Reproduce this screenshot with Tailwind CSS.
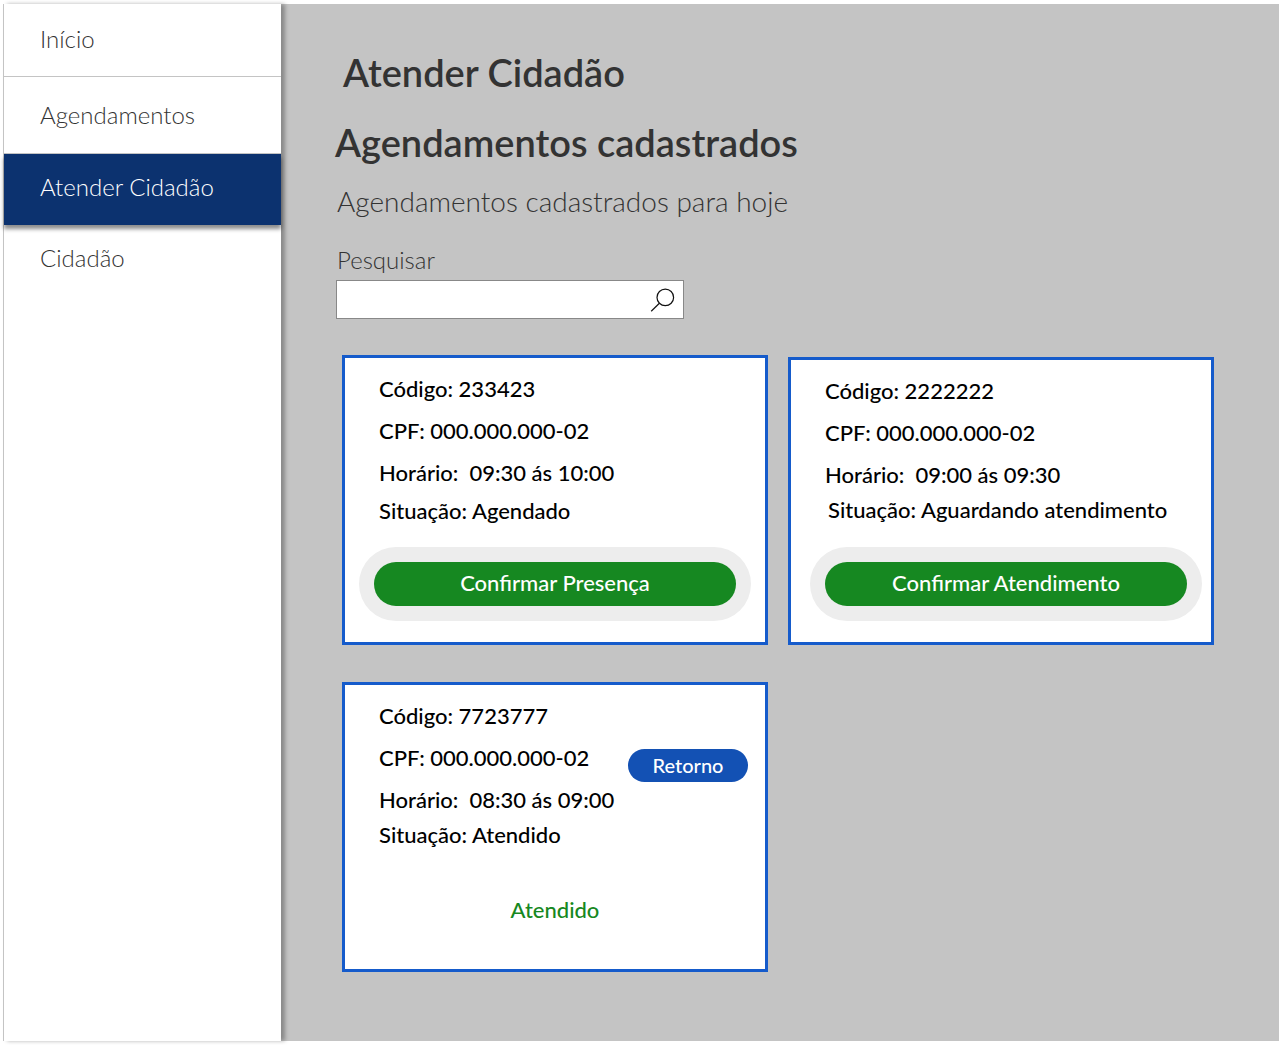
<!DOCTYPE html>
<html lang="pt-BR">
<head>
<meta charset="utf-8">
<meta name="viewport" content="width=device-width, initial-scale=1">
<title>Atender Cidadão</title>
<script src="https://cdn.jsdelivr.net/npm/@tailwindcss/browser@4"></script>
</head>
<body class="bg-white font-['Lato',sans-serif] text-black">
<div class="flex min-h-screen py-1 pl-[3px]">
  <nav class="relative z-10 w-[278px] shrink-0 border-l border-[#c4c4c4] bg-white text-2xl font-light text-[#333333] shadow-[4px_0_4px_rgba(0,0,0,0.3)]" aria-label="Menu principal">
    <a href="#" class="flex h-[73px] items-center border-b border-[#c4c4c4] pb-0.5 pl-9">Início</a>
    <a href="#" class="flex h-[77px] items-center border-b border-[#c4c4c4] pl-9">Agendamentos</a>
    <a href="#" aria-current="page" class="flex h-[71px] items-center bg-[#0c326f] pb-1.5 pl-9 text-white shadow-[0_4px_4px_rgba(0,0,0,0.45)]">Atender Cidadão</a>
    <a href="#" class="flex h-[71px] items-center pb-1.5 pl-9">Cidadão</a>
  </nav>

  <main class="min-w-0 flex-1 bg-[#c4c4c4] pt-[46px] pr-[65px] pb-16 pl-[54px]">
    <h1 class="pl-2 text-[38px] leading-11 font-semibold text-[#333333]">Atender Cidadão</h1>
    <h2 class="mt-[26px] text-[38px] leading-11 font-semibold text-[#333333]">Agendamentos cadastrados</h2>
    <p class="mt-[19px] pl-0.5 text-[28px] leading-9 font-light text-[#333333]">Agendamentos cadastrados para hoje</p>
    <form class="mt-[23px]">
      <label for="busca" class="block pb-0.5 pl-0.5 text-2xl leading-9 font-light text-[#333333]">Pesquisar</label>
      <div class="relative ml-px h-[39px] w-full max-w-[348px]">
        <input id="busca" type="search" class="h-full w-full border border-[#888888] bg-white pr-11 pl-3 text-xl outline-none">
        <button type="button" aria-label="Buscar" class="absolute top-2 right-2 size-[26px]">
          <svg viewBox="0 0 26 26" class="size-full" fill="none" stroke="#111111" stroke-width="1.2"><circle cx="15.3" cy="9.4" r="8.3"/><path d="M9.4 15.3 1.2 23.2"/></svg>
        </button>
      </div>
    </form>

    <section class="mt-9 ml-[7px] grid grid-cols-[repeat(2,minmax(0,426px))] items-end gap-x-5 gap-y-[37px] text-[22px] font-medium" aria-label="Agendamentos de hoje">
      <article class="border-3 border-[#155bcb] bg-white pt-[10px] pb-[21px]">
        <div class="pl-[34px]">
          <p class="leading-[42px]">Código: 233423</p>
          <p class="leading-[42px]">CPF: 000.000.000-02</p>
          <p class="leading-[42px]">Horário:&nbsp; 09:30 ás 10:00</p>
          <p class="leading-[34px]">Situação: Agendado</p>
        </div>
        <div class="mx-[14px] mt-[19px] rounded-full bg-[#ededed] p-[15px]">
          <button type="button" class="h-11 w-full rounded-full bg-[#168821] pb-1 text-white">Confirmar Presença</button>
        </div>
      </article>

      <article class="border-3 border-[#155bcb] bg-white pt-[10px] pb-[21px]">
        <div class="pl-[34px]">
          <p class="leading-[42px]">Código: 2222222</p>
          <p class="leading-[42px]">CPF: 000.000.000-02</p>
          <p class="leading-[42px]">Horário:&nbsp; 09:00 ás 09:30</p>
          <p class="pl-[3px] leading-7">Situação: Aguardando atendimento</p>
        </div>
        <div class="mt-[23px] mr-[9px] ml-[19px] rounded-full bg-[#ededed] p-[15px]">
          <button type="button" class="h-11 w-full rounded-full bg-[#168821] pb-1 text-white">Confirmar Atendimento</button>
        </div>
      </article>

      <article class="relative min-h-[290px] border-3 border-[#155bcb] bg-white pt-[10px] pb-[21px]">
        <div class="pl-[34px]">
          <p class="leading-[42px]">Código: 7723777</p>
          <p class="leading-[42px]">CPF: 000.000.000-02</p>
          <p class="leading-[42px]">Horário:&nbsp; 08:30 ás 09:00</p>
          <p class="leading-7">Situação: Atendido</p>
        </div>
        <p class="mt-6 text-center leading-[74px] text-[#168821]">Atendido</p>
        <span class="absolute top-16 right-[17px] w-[120px] rounded-full bg-[#1351b4] text-center text-xl leading-[33px] text-white">Retorno</span>
      </article>
    </section>
  </main>
</div>
</body>
</html>
